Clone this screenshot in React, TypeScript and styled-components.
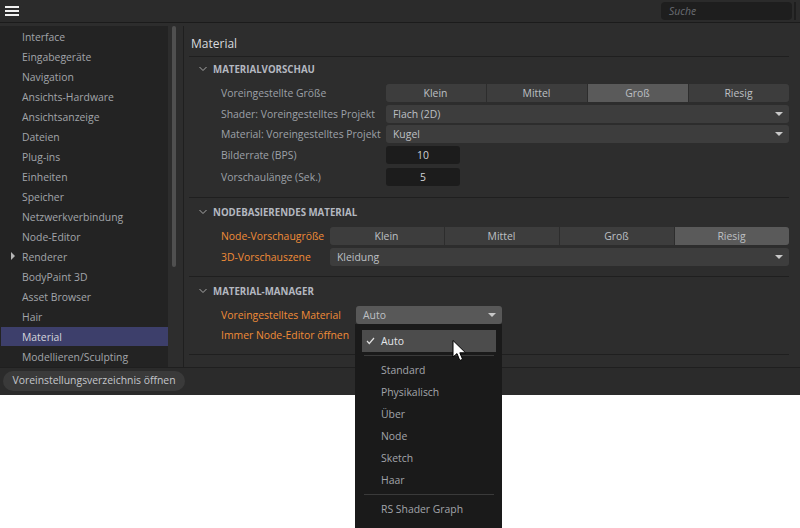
import React from 'react';
import styled, { createGlobalStyle } from 'styled-components';

const GlobalStyle = createGlobalStyle`
    html, body {
        margin: 0;
        padding: 0;
        background: #FFFFFF;
    }
    body {
        font-family: 'Open Sans', 'Noto Sans', sans-serif;
        font-size: 10.4px;
    }
`
const Page = styled.div`
    width: 800px;
    height: 528px;
    overflow: hidden;
`
const Window = styled.div`
    box-sizing: border-box;
    width: 800px;
    height: 395px;
    background: #2D2D2D;
    display: flex;
    flex-direction: column;
`
const TopBar = styled.div`
    box-sizing: border-box;
    height: 23px;
    flex: none;
    display: flex;
    align-items: center;
    justify-content: space-between;
    padding: 0 4px 1px 5px;
    border-bottom: 1px solid #1B1B1B;
    background: #2B2B2B;
`
const Burger = styled.div`
    display: flex;
    flex-direction: column;
    gap: 2px;
    width: 14px;
`
const BurgerBar = styled.span`
    height: 2px;
    background: #F2F2F2;
`
const SearchWrap = styled.div`
    display: flex;
    align-items: center;
    gap: 2px;
`
const SearchBox = styled.div`
    box-sizing: border-box;
    width: 131px;
    height: 18px;
    border-radius: 4px;
    background: #1E1E1E;
    color: #6A6D72;
    font-style: italic;
    padding-left: 8px;
    line-height: 18px;
`
const SearchGrip = styled.span`
    width: 2px;
    height: 18px;
    background: #1E1E1E;
`
const Body = styled.div`
    flex: 1;
    display: flex;
    min-height: 0;
`
const Sidebar = styled.div`
    box-sizing: border-box;
    width: 168px;
    flex: none;
    margin-top: 3px;
    padding: 1px 0 0 1px;
    background: #232323;
    overflow: hidden;
`
const NavItem = styled.div<{selected?: boolean}>`
    position: relative;
    box-sizing: border-box;
    height: 19px;
    margin-bottom: 1px;
    line-height: 20px;
    padding-left: 21px;
    color: ${(props) => props.selected ? '#D4D6DC' : '#A2A5AA'};
    background: ${(props) => props.selected ? '#3D3F6B' : 'transparent'};
`
const NavArrow = styled.span`
    position: absolute;
    left: 10px;
    top: 5px;
    width: 0;
    height: 0;
    border-left: 4px solid #B5B5B5;
    border-top: 4px solid transparent;
    border-bottom: 4px solid transparent;
`
const ScrollColumn = styled.div`
    box-sizing: border-box;
    width: 16px;
    flex: none;
    padding-left: 4px;
    border-right: 1px solid #1F1F1F;
    margin-top: 3px;
`
const ScrollThumb = styled.div`
    width: 4px;
    height: 241px;
    border-radius: 2px;
    background: #505050;
`
const Content = styled.div`
    flex: 1;
    min-width: 0;
    padding: 13px 11px 0 5px;
`
const PageTitle = styled.div`
    font-size: 12px;
    line-height: 16px;
    height: 21px;
    padding-left: 2px;
    color: #D8DADE;
    box-sizing: border-box;
    border-bottom: 1px solid #1F1F1F;
`
const Section = styled.div<{pad: string}>`
    box-sizing: border-box;
    padding: ${(props) => props.pad};
    border-bottom: 1px solid #1F1F1F;
`
const SectionHead = styled.div`
    display: flex;
    align-items: center;
    gap: 6px;
    height: 14px;
    padding-left: 10px;
    margin-bottom: 8px;
    color: #B4B8C0;
    font-weight: 700;
    font-size: 9.7px;
    text-transform: uppercase;
`
const Row = styled.div<{mb?: number}>`
    display: flex;
    align-items: center;
    height: 18px;
    margin-bottom: ${(props) => props.mb ?? 2}px;
    padding-left: 32px;
`
const Label = styled.div<{width: number, orange?: boolean}>`
    width: ${(props) => props.width}px;
    flex: none;
    white-space: nowrap;
    color: ${(props) => props.orange ? '#F08C38' : '#9DA1A8'};
`
const Segments = styled.div`
    flex: 1;
    display: flex;
    height: 18px;
    border-radius: 3px;
    overflow: hidden;
    gap: 1px;
    background: #2D2D2D;
`
const Segment = styled.div<{active?: boolean}>`
    flex: 1;
    text-align: center;
    line-height: 18px;
    padding-right: 1px;
    color: #BEC0C4;
    background: ${(props) => props.active ? '#5A5A5A' : '#3D3D3D'};
`
const Select = styled.div<{width?: number, open?: boolean}>`
    position: relative;
    box-sizing: border-box;
    flex: ${(props) => props.width ? 'none' : '1'};
    width: ${(props) => props.width ? `${props.width}px` : 'auto'};
    height: 18px;
    line-height: 18px;
    padding-left: 7px;
    border-radius: 3px;
    color: #BEC0C4;
    background: ${(props) => props.open ? '#585858' : '#3D3D3D'};
`
const Caret = styled.span`
    position: absolute;
    right: 6px;
    top: 7px;
    width: 0;
    height: 0;
    border-top: 4px solid #C8C8C8;
    border-left: 4px solid transparent;
    border-right: 4px solid transparent;
`
const NumberBox = styled.div`
    width: 74px;
    height: 18px;
    line-height: 18px;
    text-align: center;
    border-radius: 3px;
    color: #D0D2D6;
    background: #1C1C1C;
`
const Menu = styled.div`
    position: absolute;
    z-index: 5;
    left: -1px;
    top: 18px;
    box-sizing: border-box;
    width: 147px;
    height: 204px;
    padding: 6px 6px 6px 7px;
    background: #1A1A1A;
`
const MenuItem = styled.div<{hot?: boolean}>`
    position: relative;
    height: 22px;
    line-height: 22px;
    padding-left: 19px;
    color: ${(props) => props.hot ? '#E4E6EA' : '#A2A5AA'};
    background: ${(props) => props.hot ? '#4C4C4C' : 'transparent'};
`
const MenuRule = styled.div`
    height: 1px;
    margin: 3px 2px;
    background: #3A3A3A;
`
const CheckMark = styled.svg`
    position: absolute;
    left: 4px;
    top: 7px;
`
const Cursor = styled.svg`
    position: absolute;
    z-index: 6;
    left: 96px;
    top: 34px;
`
const BottomBar = styled.div`
    box-sizing: border-box;
    height: 28px;
    flex: none;
    padding: 3px 3px;
    border-top: 1px solid #1F1F1F;
    background: #2B2B2B;
`
const BottomButton = styled.div`
    display: inline-block;
    height: 20px;
    width: 182px;
    box-sizing: border-box;
    text-align: center;
    line-height: 19px;
    border-radius: 10px;
    color: #C4C6CA;
    background: #3A3A3A;
`

const Chevron = () => (
    <svg width="8" height="6" viewBox="0 0 8 6">
        <path d="M0.5 1 L4 4.5 L7.5 1" fill="none" stroke="#A8A8A8" strokeWidth="1" />
    </svg>
)

const navItems = ['Interface', 'Eingabegeräte', 'Navigation', 'Ansichts-Hardware', 'Ansichtsanzeige', 'Dateien', 'Plug-ins', 'Einheiten', 'Speicher', 'Netzwerkverbindung', 'Node-Editor', 'Renderer', 'BodyPaint 3D', 'Asset Browser', 'Hair', 'Material', 'Modellieren/Sculpting']
const sizes = ['Klein', 'Mittel', 'Groß', 'Riesig']

export default function App() {
    return (
        <Page>
            <GlobalStyle />
            <Window>
                <TopBar>
                    <Burger>
                        <BurgerBar /><BurgerBar /><BurgerBar />
                    </Burger>
                    <SearchWrap>
                        <SearchBox>Suche</SearchBox>
                        <SearchGrip />
                    </SearchWrap>
                </TopBar>
                <Body>
                    <Sidebar>
                        {navItems.map((item) => (
                            <NavItem key={item} selected={item === 'Material'}>
                                {item === 'Renderer' ? <NavArrow /> : null}
                                {item}
                            </NavItem>
                        ))}
                    </Sidebar>
                    <ScrollColumn>
                        <ScrollThumb />
                    </ScrollColumn>
                    <Content>
                        <PageTitle>Material</PageTitle>
                        <Section pad="5px 0 11px">
                            <SectionHead><Chevron />Materialvorschau</SectionHead>
                            <Row mb={3}>
                                <Label width={165}>Voreingestellte Größe</Label>
                                <Segments>
                                    {sizes.map((s) => <Segment key={s} active={s === 'Groß'}>{s}</Segment>)}
                                </Segments>
                            </Row>
                            <Row>
                                <Label width={165}>Shader: Voreingestelltes Projekt</Label>
                                <Select>Flach (2D)<Caret /></Select>
                            </Row>
                            <Row mb={3}>
                                <Label width={165}>Material: Voreingestelltes Projekt</Label>
                                <Select>Kugel<Caret /></Select>
                            </Row>
                            <Row mb={4}>
                                <Label width={165}>Bilderrate (BPS)</Label>
                                <NumberBox>10</NumberBox>
                            </Row>
                            <Row mb={0}>
                                <Label width={165}>Vorschaulänge (Sek.)</Label>
                                <NumberBox>5</NumberBox>
                            </Row>
                        </Section>
                        <Section pad="7px 0 10px">
                            <SectionHead><Chevron />Nodebasierendes Material</SectionHead>
                            <Row mb={3}>
                                <Label width={109} orange>Node-Vorschaugröße</Label>
                                <Segments>
                                    {sizes.map((s) => <Segment key={s} active={s === 'Riesig'}>{s}</Segment>)}
                                </Segments>
                            </Row>
                            <Row mb={0}>
                                <Label width={109} orange>3D-Vorschauszene</Label>
                                <Select>Kleidung<Caret /></Select>
                            </Row>
                        </Section>
                        <Section pad="7px 0 10px">
                            <SectionHead><Chevron />Material-Manager</SectionHead>
                            <Row mb={2}>
                                <Label width={135} orange>Voreingestelltes Material</Label>
                                <Select width={146} open>
                                    Auto<Caret />
                                    <Menu>
                                        <MenuItem hot>
                                            <CheckMark width="9" height="8" viewBox="0 0 9 8">
                                                <path d="M1 4 L3.3 6.5 L8 1" fill="none" stroke="#E0E0E0" strokeWidth="1.2" />
                                            </CheckMark>
                                            Auto
                                        </MenuItem>
                                        <MenuRule />
                                        <MenuItem>Standard</MenuItem>
                                        <MenuItem>Physikalisch</MenuItem>
                                        <MenuItem>Über</MenuItem>
                                        <MenuItem>Node</MenuItem>
                                        <MenuItem>Sketch</MenuItem>
                                        <MenuItem>Haar</MenuItem>
                                        <MenuRule />
                                        <MenuItem>RS Shader Graph</MenuItem>
                                    </Menu>
                                    <Cursor width="16" height="22" viewBox="0 0 16 22">
                                        <path d="M1 0.5 L1 17 L5 13.6 L7.8 20.5 L10.6 19.3 L7.8 12.8 L13.6 12.8 Z" fill="#FFFFFF" stroke="#000000" strokeWidth="1" />
                                    </Cursor>
                                </Select>
                            </Row>
                            <Row mb={0}>
                                <Label width={135} orange>Immer Node-Editor öffnen</Label>
                            </Row>
                        </Section>
                    </Content>
                </Body>
                <BottomBar>
                    <BottomButton>Voreinstellungsverzeichnis öffnen</BottomButton>
                </BottomBar>
            </Window>
        </Page>
    )
}
